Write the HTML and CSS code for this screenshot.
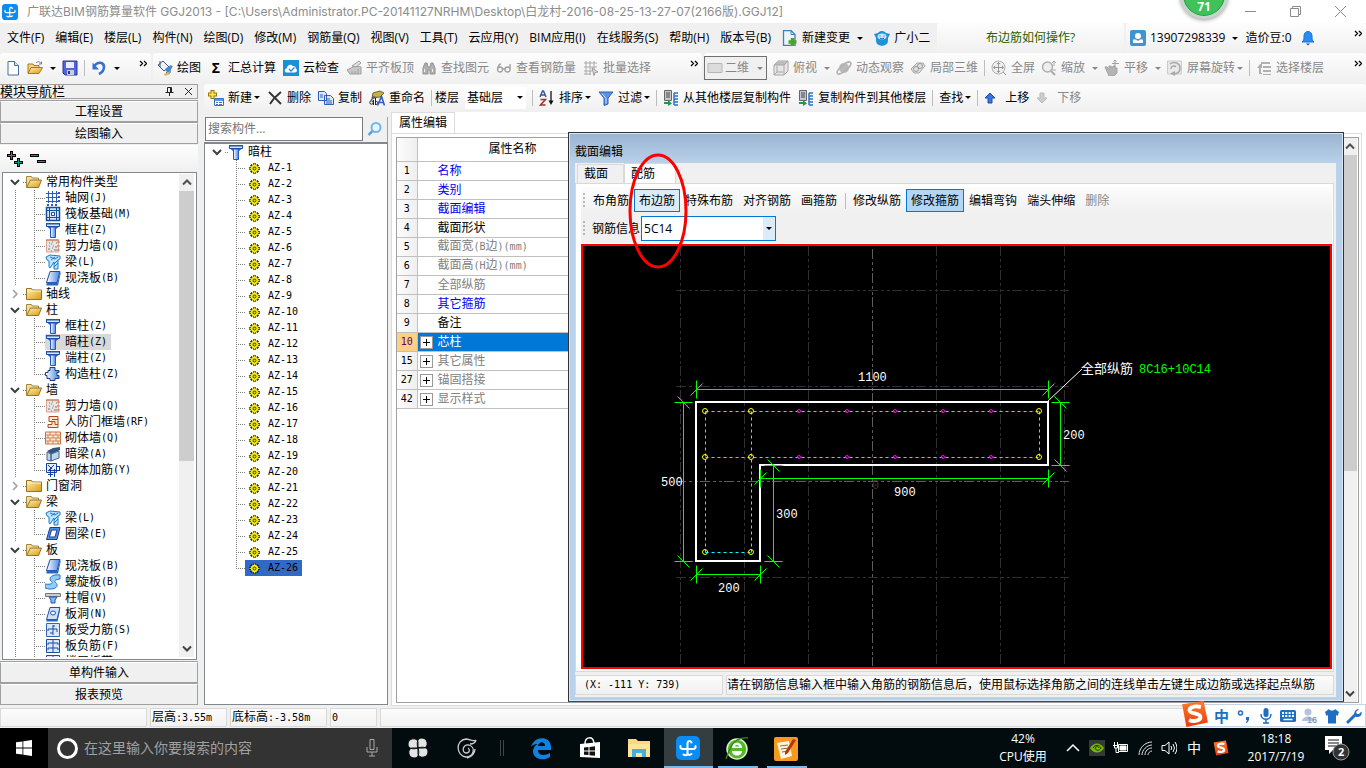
FILE: index.html
```html
<!DOCTYPE html>
<html lang="zh-CN">
<head>
    <meta charset="UTF-8">
    <meta name="viewport" content="width=device-width, initial-scale=1.0">
    <title>广联达BIM钢筋算量软件 GGJ2013</title>
    <link rel="stylesheet" href="styles.css">
</head>
<body>
    <svg class="defs" aria-hidden="true">
        <defs>
            <linearGradient id="g-blue" x1="0" x2="1"><stop offset="0" stop-color="#fff"/><stop offset="1" stop-color="#4a86e0"/></linearGradient>
            <linearGradient id="g-gold" x1="0" x2="1" y2="1"><stop offset="0" stop-color="#fff0b0"/><stop offset="1" stop-color="#d99a14"/></linearGradient>
            <linearGradient id="g-orange" x2="0" y2="1"><stop offset="0" stop-color="#ff7a2d"/><stop offset="1" stop-color="#e63c0c"/></linearGradient>
        </defs>
        <symbol id="i-app" viewBox="0 0 24 24"><rect width="24" height="24" rx="5" fill="#0a8cf5"/><path d="M15.500 6.500c-1-2-4-2-4 1V17c0 3-3 2.500-4 1.500M4.500 10c-.5 2 .5 3 2.500 3h10c2 0 3-1 2.500-3M11.500 13v4c0 2 2 2.500 4 1" fill="none" stroke="#fff" stroke-width="2" stroke-linecap="round"/></symbol>
        <symbol id="i-new" viewBox="0 0 16 16"><path d="M3 1.500h6.500l4 4v9.500H3z" fill="#fff" stroke="#4a6c9c"/><path d="M9.500 1.500v4h4" fill="#d6e4f6" stroke="#4a6c9c"/></symbol>
        <symbol id="i-open" viewBox="0 0 16 16"><path d="M1 13V4h5l1 1.500h5V8" fill="#f6d37a" stroke="#a87b20"/><path d="M1 13.500 4 7.500h11.500L12 13.500z" fill="url(#g-gold)" stroke="#a87b20"/><path d="M9 3c2-2 4-1.500 5 .5m.5-2v2.500h-2.500" fill="none" stroke="#5c7fa8"/></symbol>
        <symbol id="i-save" viewBox="0 0 16 16"><path d="M1 1h14v14H3l-2-2z" fill="#5464d8" stroke="#2b369c"/><path d="M4 2h8v6H4z" fill="#e9edfb"/><path d="M5 10h7v5H5z" fill="#c6cdee"/><path d="M6 11h2v3H6z" fill="#2b369c"/></symbol>
        <symbol id="i-undo" viewBox="0 0 16 16"><path d="M3 6c4-5 10-4 10 1 0 3-2 5.500-5 7" fill="none" stroke="#3a6fd0" stroke-width="2.600"/><path d="M1.500 2.500v7h6.500z" fill="#3a6fd0"/></symbol>
        <symbol id="i-draw" viewBox="0 0 16 16"><path d="m1 5 5-4 6 6-5 4z" fill="#eef3fb" stroke="#3b5679"/><path d="M3 1v6M9 12c2 3 5 2 4-2l2-4" fill="none" stroke="#3b5679"/><path d="m8 9 6-4 1.500 1.500L11 14z" fill="#3b8ad8"/><path d="m7 14 4-2 2 2-5 2z" fill="#e8b442"/></symbol>
        <symbol id="i-cloud" viewBox="0 0 16 16"><rect width="16" height="16" fill="#1b8fd6"/><path d="M4 12.500c-3 0-3-4 0-4.300C4 5 8 3.500 9.700 6c2-.5 3.300 1 3 2.500 2 .6 1.600 4-.7 4z" fill="#fff"/><path d="m6 9 2 2 3.500-3.500" fill="none" stroke="#1b8fd6" stroke-width="1.300"/></symbol>
        <symbol id="i-slab" viewBox="0 0 16 16"><path d="m1 10 8-4 6 1v7H4z" fill="#c9c9c9" stroke="#9d9d9d"/><path d="M6 6 13 1l2 2-5 4zM6 11v3m3-3v3m3-5v5" fill="#e2e2e2" stroke="#9d9d9d"/></symbol>
        <symbol id="i-find" viewBox="0 0 16 16"><path d="M2 14V8l2-5h2l1 4h2l1-4h2l2 5v6h-5v-4H7v4z" fill="#b0b0b0" stroke="#929292"/><path d="M3.500 9v3m8-3v3" stroke="#eee"/></symbol>
        <symbol id="i-glasses" viewBox="0 0 16 16"><g fill="none" stroke="#a0a0a0" stroke-width="1.300"><circle cx="4" cy="9.500" r="2.500"/><circle cx="11.500" cy="9.500" r="2.500"/><path d="M6.500 9h2.500M1.500 9c1-4 2-5 3.500-5M14 9V4"/></g></symbol>
        <symbol id="i-batch" viewBox="0 0 16 16"><path d="M1 3h13M1 7h13M1 11h8M1 14h7M3 1v14M7 1v14M11 1v8" stroke="#aaa" fill="none"/><path d="m9 8 6 4-3 .5-1 3z" fill="#ddd" stroke="#999"/></symbol>
        <symbol id="i-rect" viewBox="0 0 16 16"><path d="M1 3.500h14v9H1z" fill="#dcdcdc" stroke="#b6b6b6"/></symbol>
        <symbol id="i-cube" viewBox="0 0 16 16"><path d="m1 5 4-4h10v10l-4 4H1z" fill="#e6e6e6" stroke="#a6a6a6"/><path d="m1 5 4-4h10l-4 4z" fill="#bcbcbc"/><path d="M1 5h10v10M11 5l4-4M4 6v6l-3 3m3-3h6" fill="none" stroke="#a6a6a6"/></symbol>
        <symbol id="i-orbit" viewBox="0 0 16 16"><circle cx="8" cy="8" r="5" fill="#b9b9b9"/><ellipse cx="8" cy="8" rx="8.500" ry="3" transform="rotate(-40 8 8)" fill="none" stroke="#b2b2b2" stroke-width="1.500"/></symbol>
        <symbol id="i-part" viewBox="0 0 16 16"><path d="m1 9 6-6h6l2 3-6 7H4z" fill="#e2e2e2" stroke="#a6a6a6"/><circle cx="6" cy="9" r="2.500" fill="none" stroke="#999"/><circle cx="10" cy="6" r="2.500" fill="none" stroke="#999"/></symbol>
        <symbol id="i-full" viewBox="0 0 16 16"><circle cx="7.500" cy="7.500" r="6.500" fill="#eee" stroke="#b0b0b0"/><path d="M7.500 2.500v10M2.500 7.500h10M6 4l1.500-1.500L9 4M6 11l1.500 1.500L9 11M4 6 2.500 7.500 4 9m7-3 1.500 1.500L11 9m1 3 3 3" fill="none" stroke="#999"/></symbol>
        <symbol id="i-zoom" viewBox="0 0 16 16"><circle cx="6.500" cy="7" r="5" fill="#eee" stroke="#b0b0b0" stroke-width="1.500"/><path d="m10 11 4 4" stroke="#aaa" stroke-width="2"/><path d="M13 1v5m-2-3 2-2 2 2m-4 7h4" fill="none" stroke="#aaa"/></symbol>
        <symbol id="i-pan" viewBox="0 0 16 16"><path d="M1 7c2-1 3 1 4 2V6h2v1h2V6h2v2h2v5l-3 3H5z" fill="#b4b4b4" stroke="#a4a4a4"/><path d="M11 0v7M8 3.500h7M9.500 1.500 11 0l1.500 1.500" fill="none" stroke="#a0a0a0"/></symbol>
        <symbol id="i-rotate" viewBox="0 0 16 16"><path d="M.5 1h14v13H.5z" fill="#e9e9e9" stroke="#ccc"/><path d="M3 4c4-3 10-1 10 4s-4 6-7 6M4 9c0-3 3-4 5-2" fill="none" stroke="#aaa" stroke-width="1.600"/><path d="M3 13.500 8 11v5z" fill="#aaa"/></symbol>
        <symbol id="i-floors" viewBox="0 0 16 16"><path d="M5 2h9v2H5zm2 4h8v2H7zm0 4h8v2H7zm0 4h8v1H7zM4 4 1 8h2v6h3v-1H5V8h1V4z" fill="#b0b0b0"/></symbol>
        <symbol id="i-add" viewBox="0 0 16 16"><path d="M4.500 0v9M0 4.500h9" stroke="#9c7900" stroke-width="4"/><path d="M4.500 1v7M1 4.500h7" stroke="#ffe24a" stroke-width="2"/><path d="M6.500 8.500h9v7h-9z" fill="#fff" stroke="#3a6fc4"/><path d="M7 9h8v2H7z" fill="#5b93e6"/><path d="M8 12.500h2m1 0h3m-6 2h2m1 0h3" stroke="#3a6fc4"/></symbol>
        <symbol id="i-x" viewBox="0 0 16 16"><path d="m2 2 12 12M14 2C9 6 6 9 3 14" stroke="#333" stroke-width="1.800" fill="none"/></symbol>
        <symbol id="i-copy" viewBox="0 0 16 16"><path d="M.5 1.500h6l2 2v7h-8zM6.500 5.500h6l3 3v6h-9z" fill="#d9e7fb" stroke="#2d5fb8"/><path d="M2 5h3M2 7h3m3 2h4m-4 2h6m-6 2h6" stroke="#2d5fb8"/></symbol>
        <symbol id="i-rename" viewBox="0 0 16 16"><path d="m4 3 7-2 4 2-4 4-8 1z" fill="#c8b13c" stroke="#6c6637"/><path d="m1 11 3-5 4 1z" fill="#55606a"/><circle cx="2.500" cy="12.500" r="1.700" fill="none" stroke="#222"/><path d="M4.500 10v5M6.500 8v7m0-3c3-2 3 3 0 2.500" fill="none" stroke="#222"/><path d="m8.500 15.500 4-9 3 9m-5-3h4" fill="none" stroke="#2c5fc4" stroke-width="1.600"/></symbol>
        <symbol id="i-sort" viewBox="0 0 16 16"><path d="m1 7 2.500-6h1L7 7M2 5h4" fill="none" stroke="#3555a5" stroke-width="1.500"/><path d="M1.500 9.500h5l-5 5.500h5" fill="none" stroke="#a33232" stroke-width="1.500"/><path d="M12 1v11" stroke="#111" stroke-width="1.300"/><path d="M9.500 10.500h5L12 15z" fill="#111"/></symbol>
        <symbol id="i-filter" viewBox="0 0 16 16"><path d="M1 2h14l-5 6v6l-4 1.500V8z" fill="#5b93e6" stroke="#2c5fb4"/><path d="m4 3.500 4 5v5" stroke="#cfe1fb" fill="none"/></symbol>
        <symbol id="i-floorcopy" viewBox="0 0 16 16"><path d="M1.500.5h7v10h-7z" fill="#c5c9cf" stroke="#666"/><path d="M3 3h4M3 5h4M3 7h4" stroke="#444"/><path d="M11 3h4M11 6h4m-4 3h4m-4 3h4m-4 3h4M11 3v12" stroke="#2c71c9" stroke-width="1.500"/><path d="M1 12h4v-2l4 3.500L5 16v-2H1z" fill="#1a9b4a"/></symbol>
        <symbol id="i-up" viewBox="0 0 12 12"><path d="m6 1 5 5H8v5H4V6H1z" fill="#3b74e0" stroke="#1f4da8"/></symbol>
        <symbol id="i-down" viewBox="0 0 12 12"><path d="m6 11 5-5H8V1H4v5H1z" fill="#ccc" stroke="#bbb"/></symbol>
        <symbol id="i-change" viewBox="0 0 16 16"><path d="M1.500.5H9l4 4v11H1.500z" fill="#eaf5fd" stroke="#3b83b8" stroke-width="1.300"/><path d="M9 .5v4h4" fill="none" stroke="#3b83b8"/><path d="M10.500 8v8m-4-4h8" stroke="#48a525" stroke-width="3.500"/></symbol>
        <symbol id="i-face" viewBox="0 0 16 16"><path d="M0 4 4 3c3-3 6-2 8 0l4 1-2 4v2c0 4-2 5-6 6-4-1-6-2-6-6V8z" fill="#1e90dc"/><ellipse cx="8" cy="6.500" rx="4.500" ry="3" fill="#c9e7fb"/><path d="M5.500 6h1M9.500 6h1M6 8c1 1.200 3 1.200 4 0" stroke="#0c5c99" fill="none"/></symbol>
        <symbol id="i-user" viewBox="0 0 16 16"><rect width="16" height="16" rx="2" fill="#3e95cf"/><circle cx="8" cy="6" r="3" fill="#fff"/><path d="M3 13V9.500h3L8 11l2-1.500h3V13z" fill="#fff"/></symbol>
        <symbol id="i-bell" viewBox="0 0 16 16"><path d="M2 12c2-1.500 2-3 2-6 0-6 8-6 8 0 0 3 0 4.500 2 6z" fill="#2b8bf2" stroke="#1672d6"/><path d="M6 13.500h4L8 15.500z" fill="#1252a0"/></symbol>
        <symbol id="i-search" viewBox="0 0 16 16"><circle cx="9" cy="6.500" r="4.500" fill="#e9f5ff" stroke="#6fb7ee" stroke-width="2"/><path d="m5.500 10-4 4" stroke="#5aa7e4" stroke-width="2.500"/></symbol>
        <symbol id="i-down-chev" viewBox="0 0 10 10"><path d="m1 3 4 4 4-4" fill="none" stroke="#404040" stroke-width="2"/></symbol>
        <symbol id="i-up-chev" viewBox="0 0 10 10"><path d="m1 7 4-4 4 4" fill="none" stroke="#505050" stroke-width="2"/></symbol>
        <symbol id="i-right-chev" viewBox="0 0 10 10"><path d="m3 1 4 4-4 4" fill="none" stroke="#a0a0a0" stroke-width="1.500"/></symbol>
        <symbol id="i-more" viewBox="0 0 8 8"><path d="m1 1 2.500 2.500L1 6m4-5 2.500 2.500L5 6" fill="none" stroke="#000" stroke-width="1.300"/></symbol>
        <symbol id="t-open" viewBox="0 0 16 16"><path d="M.5 13V2.500h5l1 1.500h6V6" fill="#f5dc96" stroke="#a88744"/><path d="m.5 13.500 4-7.500h11l-3 7.500z" fill="url(#g-gold)" stroke="#96722a"/></symbol>
        <symbol id="t-closed" viewBox="0 0 16 16"><path d="M.5 13.500v-11h5l1 1.500h9v9.500z" fill="url(#g-gold)" stroke="#96722a"/><path d="M1 5h14" stroke="#fff3c4"/></symbol>
        <symbol id="t-axis" viewBox="0 0 16 16"><path d="M3.500 1v12M7.500 1v12M11.500 1v12M1 3.500h12M1 7.500h12M1 11.500h12" stroke="#2a5cc0"/><path d="M13 2h2v2h-2zm0 4h2v2h-2zm0 4h2v2h-2zM2 14h2v2H2zm4 0h2v2H6zm4 0h2v2h-2z" fill="#2a5cc0"/></symbol>
        <symbol id="t-raft" viewBox="0 0 16 16"><path d="M1.500 1.500h13v13h-13z" fill="#d7e6fa" stroke="#174f9b" stroke-width="1.500"/><path d="M4.500 2v12M11.500 2v12M2 4.500h12M2 11.500h12" stroke="#174f9b"/><path d="M6.500 6.500h3v3h-3z" fill="#fff" stroke="#174f9b"/></symbol>
        <symbol id="t-column" viewBox="0 0 16 16"><path d="M1.500 1.500h13v3h-13z" fill="#d7e5fb" stroke="#19479c"/><path d="M1 1h14v1.500H1z" fill="#24559f"/><path d="M5.500 5h5v10.500h-5z" fill="url(#g-blue)" stroke="#2159c4"/><path d="m2.500 5 3 2.500v-3zm11 0-3 2.500v-3z" fill="#2d65cb"/></symbol>
        <symbol id="t-wall" viewBox="0 0 16 16"><path d="M1.500 2h12v12h-12z" fill="#e6e5e3" stroke="#d9a68e"/><path d="M1 2h13" stroke="#c66a45"/><path d="M4 5h1m2-1h1m3 1h1M4 8h1m3 0h1M3 11h2m2-1h1m1 2h3M6 6h1m3 3h2m-6 4h1" stroke="#777"/><path d="M12 4h3m-3 4h3m-3 4h3" stroke="#e07030"/></symbol>
        <symbol id="t-beam" viewBox="0 0 16 16"><path d="m1 3 4-2 10 1v3l-2 1v9H9V8l-4 6-1-1V7L2 6z" fill="#bfe3fa" stroke="#1d7cc9"/><path d="m5 3 5 2 3-2M6 6l4-3m-1 7 4-4m-4 7 4-4" fill="none" stroke="#1d7cc9"/></symbol>
        <symbol id="t-plate" viewBox="0 0 16 16"><path d="M5 1.500h10l-3 11H1.500z" fill="url(#g-blue)" stroke="#1c50a8"/><path d="M1.500 12.500h11l3-11v3l-2.500 11H1.500z" fill="#2a64c4"/></symbol>
        <symbol id="t-ctor" viewBox="0 0 16 16"><path d="M5 1.500h5v3h4v2h-2v3h2v3h-4v2H5v-2H2v-3H.5v-3H3v-2h2z" fill="url(#g-blue)" stroke="#173f85"/></symbol>
        <symbol id="t-door" viewBox="0 0 16 16"><path d="M4 2.500h9v11H3v-3h4v-3H4z" fill="#ffe5cf" stroke="#a74f1f"/><path d="M7 5.500h6M7 7.500h3v3h3" fill="none" stroke="#a74f1f"/></symbol>
        <symbol id="t-brick" viewBox="0 0 16 16"><path d="M.5 2h15v12H.5z" fill="#fcebdc" stroke="#c87243"/><path d="M1 5h14M1 8h14M1 11h14M5 2v3m6-3v3M3 5v3m5-3v3m5-3v3M5 8v3m6-3v3M3 11v3m5-3v3m5-3v3" stroke="#d0814f"/></symbol>
        <symbol id="t-hbeam" viewBox="0 0 16 16"><path d="M2 6v8l4 1V8zm4 2 8-3v7l-8 3z" fill="#bcd6f2" stroke="#4a6585"/><path d="m2 5 6-3 7-1v3L6 8z" fill="#34557e"/></symbol>
        <symbol id="t-rebar" viewBox="0 0 16 16"><path d="M1.500 1.500h10v9h-10z" fill="#e2ecfc" stroke="#1640a2"/><path d="M5.500 7v8M9.500 7v8M3 8.500h12M11 4.500h4M14.500 4v5M4 8l5-5M3 3l4 4M3 12.500h5" fill="none" stroke="#1640a2"/></symbol>
        <symbol id="t-ring" viewBox="0 0 16 16"><path d="M5 1.500h10l-3 12H1.500z" fill="#5590e4" stroke="#143f94"/><path d="M6.500 4h5.500l-2 7H4.500z" fill="#fff" stroke="#143f94"/></symbol>
        <symbol id="t-spiral" viewBox="0 0 16 16"><path d="M15 1C7 0 3 4 6 7c3 2 0 4-6 3v4c8 3 15-1 11-5-2-2-2-3 4-4z" fill="#90cdf7" stroke="#1d74c4"/></symbol>
        <symbol id="t-cap" viewBox="0 0 16 16"><path d="M.5 3.500h15v3H.5z" fill="#ccc" stroke="#777"/><path d="M4 7h8l-2 3v3H6v-3z" fill="#8ab6f0" stroke="#1f56ac"/></symbol>
        <symbol id="t-hole" viewBox="0 0 16 16"><path d="M5 1.500h10l-3 12H1.500z" fill="#d0e2fb" stroke="#1c50a8"/><path d="M1.500 13.500H12l3-12v3l-2.500 11h-11z" fill="#2a64c4"/><ellipse cx="8" cy="7" rx="2.500" ry="2" fill="#fff" stroke="#1c50a8"/></symbol>
        <symbol id="t-sbar" viewBox="0 0 16 16"><path d="M1.500 1.500h13v13h-13z" fill="#dbe8fb" stroke="#3264b8"/><path d="M8 3v10M3 9V7h9v3M5 11h3m0-7h2" fill="none" stroke="#1c4da4"/></symbol>
        <symbol id="t-fbar" viewBox="0 0 16 16"><path d="M1.500 1.500h13v13h-13z" fill="#dbe8fb" stroke="#1c4da4"/><path d="M8 2v12M3 7V5h10v2M3 12v-2h10v2" fill="none" stroke="#1c4da4"/></symbol>
        <symbol id="t-gear" viewBox="0 0 12 12"><path d="M6 0v12M0 6h12M2 2l8 8M10 2l-8 8" stroke="#1a1a00" stroke-width="2.500"/><circle cx="6" cy="6" r="4" fill="#f5ee00"/><path d="M6 .5v2M6 9.500v2M.5 6h2M9.500 6h2" stroke="#f5ee00"/><circle cx="6" cy="6" r="1.600" fill="#f5ee00" stroke="#222"/></symbol>
        <symbol id="s-logo" viewBox="0 0 26 26"><path d="m1 4 20-3 4 20-20 4z" fill="url(#g-orange)"/><path d="M18.500 6.500C12 5 7.500 7 8 10s9.500 2 10 5.500S12 20.500 7.500 18.500" fill="none" stroke="#fff" stroke-width="3.600"/></symbol>
    </svg>

    <header class="titlebar">
        <svg class="icon"><use href="#i-app"/></svg>
        <h1>广联达BIM钢筋算量软件 GGJ2013 - [C:\Users\Administrator.PC-20141127NRHM\Desktop\白龙村-2016-08-25-13-27-07(2166版).GGJ12]</h1>
        <div class="win-controls">
            <button aria-label="最小化"><svg viewBox="0 0 11 11"><path d="M0 5.500h11"/></svg></button>
            <button aria-label="还原"><svg viewBox="0 0 11 11"><path d="M.5 2.500h8v8h-8zM2.500 2V.5h8v8H9"/></svg></button>
            <button aria-label="关闭"><svg viewBox="0 0 11 11"><path d="m0 0 11 11M11 0 0 11"/></svg></button>
        </div>
    </header>
    <div class="badge">71</div>

    <nav class="menubar">
        <div class="menus">
            <button>文件(F)</button>
            <button>编辑(E)</button>
            <button>楼层(L)</button>
            <button>构件(N)</button>
            <button>绘图(D)</button>
            <button>修改(M)</button>
            <button>钢筋量(Q)</button>
            <button>视图(V)</button>
            <button>工具(T)</button>
            <button>云应用(Y)</button>
            <button>BIM应用(I)</button>
            <button>在线服务(S)</button>
            <button>帮助(H)</button>
            <button>版本号(B)</button>
            <button class="tool"><svg class="icon"><use href="#i-change"/></svg>新建变更<i class="caret wide"></i></button>
            <button class="tool"><svg class="icon"><use href="#i-face"/></svg>广小二</button>
        </div>
        <div class="strip help"><a href="#">布边筋如何操作?</a></div>
        <div class="strip account">
            <button class="tool"><svg class="icon"><use href="#i-user"/></svg>13907298339<i class="caret wide"></i></button>
            <button class="tool">造价豆:0 <svg class="icon bell"><use href="#i-bell"/></svg></button>
            <svg class="more"><use href="#i-more"/></svg>
        </div>
    </nav>

    <div class="toolbar main-tools">
        <div class="strip file-tools">
            <button class="tool" aria-label="新建"><svg class="icon"><use href="#i-new"/></svg></button>
            <button class="tool" aria-label="打开"><svg class="icon"><use href="#i-open"/></svg><i class="caret wide"></i></button>
            <button class="tool" aria-label="保存"><svg class="icon"><use href="#i-save"/></svg></button>
            <span class="sep"></span>
            <button class="tool" aria-label="撤销"><svg class="icon"><use href="#i-undo"/></svg><i class="caret wide"></i></button>
            <svg class="more"><use href="#i-more"/></svg>
        </div>
        <div class="strip draw-tools">
            <button class="tool"><svg class="icon"><use href="#i-draw"/></svg>绘图</button>
            <button class="tool"><b class="icon sigma">Σ</b>汇总计算</button>
            <button class="tool"><svg class="icon"><use href="#i-cloud"/></svg>云检查</button>
            <button class="tool" disabled><svg class="icon"><use href="#i-slab"/></svg>平齐板顶</button>
            <button class="tool" disabled><svg class="icon"><use href="#i-find"/></svg>查找图元</button>
            <button class="tool" disabled><svg class="icon"><use href="#i-glasses"/></svg>查看钢筋量</button>
            <button class="tool" disabled><svg class="icon"><use href="#i-batch"/></svg>批量选择</button>
            <svg class="more"><use href="#i-more"/></svg>
        </div>
        <div class="strip view-tools">
            <label class="dim-box"><svg class="icon"><use href="#i-rect"/></svg><select disabled aria-label="视图维度"><option>二维</option></select><i class="caret"></i></label>
            <button class="tool" disabled><svg class="icon"><use href="#i-cube"/></svg>俯视<i class="caret wide"></i></button>
            <button class="tool" disabled><svg class="icon"><use href="#i-orbit"/></svg>动态观察</button>
            <button class="tool" disabled><svg class="icon"><use href="#i-part"/></svg>局部三维</button>
            <span class="sep"></span>
            <button class="tool" disabled><svg class="icon"><use href="#i-full"/></svg>全屏</button>
            <button class="tool" disabled><svg class="icon"><use href="#i-zoom"/></svg>缩放<i class="caret wide"></i></button>
            <button class="tool" disabled><svg class="icon"><use href="#i-pan"/></svg>平移<i class="caret wide"></i></button>
            <button class="tool" disabled><svg class="icon"><use href="#i-rotate"/></svg>屏幕旋转<i class="caret"></i></button>
            <span class="sep"></span>
            <button class="tool" disabled><svg class="icon"><use href="#i-floors"/></svg>选择楼层</button>
            <svg class="more"><use href="#i-more"/></svg>
        </div>
    </div>

    <div class="workspace">
        <aside class="navigator">
            <div class="nav-head"><span>模块导航栏</span>
                <svg viewBox="0 0 9 9"><path d="M2.500 5V.5h4V5M.5 5.500h8M4.500 6v3M5.500 1v4"/></svg>
                <svg viewBox="0 0 9 9"><path d="m1 1 7 7M8 1 1 8"/></svg>
            </div>
            <button class="nav-btn">工程设置</button>
            <button class="nav-btn">绘图输入</button>
            <div class="nav-tools">
                <button aria-label="全部展开"><svg viewBox="0 0 16 16"><path d="M4.500 0v9M0 4.500h9M11.500 7v9M7 11.500h9" stroke="#000" stroke-width="3"/><path d="M4.500 1v7M1 4.500h7M11.500 8v7M8 11.500h7" stroke="#0a9a8a"/></svg></button>
                <button aria-label="全部折叠"><svg viewBox="0 0 16 16"><path d="M0 4.500h9M7 10.500h9" stroke="#000" stroke-width="3"/><path d="M1 4.500h7M8 10.500h7" stroke="#0a9a8a"/></svg></button>
            </div>
            <div class="tree-box">
                <ul class="tree" id="module-tree"></ul>
                <div class="scrollbar">
                    <svg><use href="#i-up-chev"/></svg>
                    <div class="thumb"></div>
                    <svg><use href="#i-down-chev"/></svg>
                </div>
            </div>
            <button class="nav-btn">单构件输入</button>
            <button class="nav-btn">报表预览</button>
        </aside>

        <main class="content">
            <div class="toolbar">
                <div class="strip component-tools">
                    <button class="tool"><svg class="icon"><use href="#i-add"/></svg>新建<i class="caret"></i></button>
                    <button class="tool"><svg class="icon"><use href="#i-x"/></svg>删除</button>
                    <button class="tool"><svg class="icon"><use href="#i-copy"/></svg>复制</button>
                    <button class="tool"><svg class="icon"><use href="#i-rename"/></svg>重命名</button>
                    <span class="sep"></span>
                    <label class="floor"><span>楼层</span>
                        <span class="floor-box"><select><option>基础层</option></select><i class="caret"></i></span>
                    </label>
                    <span class="sep"></span>
                    <button class="tool"><svg class="icon"><use href="#i-sort"/></svg>排序<i class="caret"></i></button>
                    <button class="tool"><svg class="icon"><use href="#i-filter"/></svg>过滤<i class="caret"></i></button>
                    <span class="sep"></span>
                    <button class="tool"><svg class="icon"><use href="#i-floorcopy"/></svg>从其他楼层复制构件</button>
                    <button class="tool"><svg class="icon"><use href="#i-floorcopy"/></svg>复制构件到其他楼层</button>
                    <span class="sep"></span>
                    <button class="tool">查找<i class="caret"></i></button>
                    <span class="sep"></span>
                    <button class="tool move"><svg class="icon"><use href="#i-up"/></svg>上移</button>
                    <button class="tool move" disabled><svg class="icon"><use href="#i-down"/></svg>下移</button>
                </div>
            </div>

            <div class="panes">
                <section class="components">
                    <div class="search">
                        <input type="text" placeholder="搜索构件..." aria-label="搜索构件">
                        <button aria-label="搜索"><svg class="icon"><use href="#i-search"/></svg></button>
                    </div>
                    <div class="component-box">
                        <ul class="tree wide-tree" id="component-tree"></ul>
                    </div>
                </section>

                <section class="editor">
                    <div class="tab">属性编辑</div>
                    <div class="page">
                        <div class="grid-box">
                            <table class="props">
                                <thead>
                                    <tr><th class="no"></th><th class="name">属性名称</th><th></th></tr>
                                </thead>
                                <tbody id="props-body"></tbody>
                            </table>
                            <div class="scrollbar">
                                <svg><use href="#i-up-chev"/></svg>
                                <div class="thumb"></div>
                                <svg><use href="#i-down-chev"/></svg>
                            </div>
                        </div>
                    </div>

                    <div class="dialog" role="dialog" aria-label="截面编辑">
                        <div class="dialog-title">截面编辑</div>
                        <div class="dialog-body">
                            <div class="dialog-tabs">
                                <button>截面</button>
                                <button class="active">配筋</button>
                            </div>
                            <div class="dialog-page">
                                <div class="dialog-tools">
                                    <span class="grip"></span>
                                    <button>布角筋</button>
                                    <button class="hover">布边筋</button>
                                    <button>特殊布筋</button>
                                    <button>对齐钢筋</button>
                                    <button>画箍筋</button>
                                    <span class="sep"></span>
                                    <button>修改纵筋</button>
                                    <button class="checked">修改箍筋</button>
                                    <button>编辑弯钩</button>
                                    <button>端头伸缩</button>
                                    <button disabled>删除</button>
                                </div>
                                <div class="dialog-tools second">
                                    <span class="grip"></span>
                                    <label for="rebar">钢筋信息</label>
                                    <span class="rebar-box"><select id="rebar"><option>5C14</option></select><i class="caret"></i></span>
                                </div>
                                <div class="canvas">
                                    <svg class="drawing" width="747" height="420" viewBox="0 0 747 420">
                                        <!-- 轴网 -->
                                        <g class="axis">
                                            <path d="M97.500 0v420M161.500 0v420M225.500 0v420M353.500 0v420M417.500 0v420M481.500 0v420M93 44.500h393M93 140.500h393M93 331.500h393"/>
                                            <path class="center" d="M289.500 3v417M93 235.500h393"/>
                                        </g>
                                        <text class="origin" x="289" y="243">0</text>
                                        <!-- 截面轮廓 -->
                                        <path class="outline" d="M113 156h352v63H177v96h-64z"/>
                                        <!-- 箍筋 -->
                                        <path class="stirrup" d="M122.500 165.500h334M122.500 211.500h334M122.500 306.500h46M122.500 165.500v141M168.500 165.500v141M456.500 165.500v46"/>
                                        <g id="bars"></g>
                                        <!-- 尺寸标注 -->
                                        <g class="dim" id="dims"></g>
                                        <path class="leader" d="m465 155 34-32"/>
                                        <g class="label">
                                            <text x="275" y="135">1100</text>
                                            <text x="78" y="240">500</text>
                                            <text x="480" y="193">200</text>
                                            <text x="311" y="250">900</text>
                                            <text x="193" y="272">300</text>
                                            <text x="135" y="346">200</text>
                                            <text class="cjk" x="498" y="127">全部纵筋</text>
                                            <text class="green" x="556" y="127">8C16+10C14</text>
                                        </g>
                                    </svg>
                                </div>
                            </div>
                            <div class="dialog-status">
                                <span class="pos">(X: -111 Y: 739)</span>
                                <span class="hint">请在钢筋信息输入框中输入角筋的钢筋信息后，使用鼠标选择角筋之间的连线单击左键生成边筋或选择起点纵筋</span>
                            </div>
                        </div>
                        <svg class="mark" viewBox="0 0 62 118"><ellipse cx="31" cy="59" rx="28" ry="56"/></svg>
                    </div>
                </section>
            </div>
        </main>
    </div>

    <footer class="statusbar">
        <span class="cell empty"></span>
        <span class="cell height">层高<span class="lat">:3.55m</span></span>
        <span class="cell bottom">底标高<span class="lat">:-3.58m</span></span>
        <span class="cell zero"><span class="lat">0</span></span>
        <span class="cell rest"></span>
        <div class="ime">
            <svg class="s-big"><use href="#s-logo"/></svg>
            <b>中</b>
            <svg viewBox="0 0 16 16"><circle cx="4.500" cy="5" r="2" fill="none" stroke="#1e6fc4" stroke-width="1.500"/><path d="M10 9h3v3l-2 3h-1l1-3h-1z" fill="#1e6fc4"/></svg>
            <svg viewBox="0 0 16 16"><rect x="5.500" y="0" width="5" height="9" rx="2.500" fill="#1e6fc4"/><path d="M3 6c0 7 10 7 10 0M8 11v4M5 15h6" fill="none" stroke="#1e6fc4" stroke-width="1.500"/></svg>
            <svg viewBox="0 0 16 16"><rect y="2" width="16" height="12" rx="1.500" fill="#1e6fc4"/><path d="M2 5h12M2 8h12" stroke="#fff" stroke-width="1.800" stroke-dasharray="2 1.300"/><path d="M3.500 11.500h9" stroke="#fff" stroke-width="1.500"/></svg>
            <svg viewBox="0 0 16 16"><circle cx="6" cy="4" r="3.500" fill="#b4c4dc"/><path d="M0 13c0-6 12-6 12 0z" fill="#b4c4dc"/><text x="5" y="15" font-size="9" font-weight="bold" font-family="Liberation Sans" fill="#8a9bb8">16</text></svg>
            <svg viewBox="0 0 16 16"><path d="m1 4 4-3c1 2 5 2 6 0l4 3-1.500 4L12 7v8.500H4V7L2.500 8z" fill="#1e6fc4"/></svg>
            <svg viewBox="0 0 16 16"><path d="m2 14 7-7" stroke="#1e6fc4" stroke-width="3" stroke-linecap="round"/><path d="M13 1 10 4l1 2 2 0 2.500-2.500c1 4-2 6-5 5.500C6.500 8 8 1 13 1z" fill="#1e6fc4"/></svg>
        </div>
    </footer>

    <div class="taskbar">
        <button class="start" aria-label="开始"><svg viewBox="0 0 16 16"><path d="M0 2.300 6.500 1.400v6.200H0zM7.300 1.300 16 0v7.600H7.300zM0 8.400h6.500v6.200L0 13.700zM7.300 8.400H16V16l-8.700-1.300z" fill="#fff"/></svg></button>
        <label class="cortana">
            <i class="ring"></i>
            <input type="text" placeholder="在这里输入你要搜索的内容">
            <svg viewBox="0 0 12 18"><path d="M4 .5h4v10H4zM1 8v5h10V8M6 13v4M3 17h6" fill="none" stroke="#aaa"/></svg>
        </label>
        <div class="apps">
            <button aria-label="应用"><svg viewBox="0 0 24 24"><path d="M12 12c-6 2-10 0-10-4 0-6 9-7 10-2zM12 12c-2-6 0-10 4-10 6 0 7 9 2 10zM12 12c6-2 10 0 10 4 0 6-9 7-10 2zM12 12c2 6 0 10-4 10-6 0-7-9-2-10z" fill="#e4e4e4" stroke="#020c0e"/></svg></button>
            <button aria-label="加速球"><svg viewBox="0 0 24 24" fill="none" stroke="#ccc" stroke-width="1.300"><path d="M21 4c-4 2-6-1-10-1C0 4 1 20 11 21c8 0 10-10 3-12-6-1-8 7-3 8 4 0 4-4 2-5M21 4c-1 4-4 4-6 4M20 13c0 4-3 8-8 9"/></svg></button>
            <span class="bars"></span>
            <button aria-label="Edge"><svg viewBox="0 0 24 24"><path d="M2 11C4 1 20-2 22 10v4H9c0 6 7 6 12 3v4c-6 4-16 3-17-5 0-4 2-7 5-8-5 0-6 2-7 3zm7-1h7c0-5-6-5-7 0z" fill="#1181e0" fill-rule="evenodd"/></svg></button>
            <button aria-label="应用商店"><svg viewBox="0 0 24 24"><path d="M2 8 22 6v16L2 21z" fill="#fff"/><path d="M7 8c0-8 8-8 9-1" fill="none" stroke="#fff" stroke-width="1.500"/><path d="M6 11.500 10.500 11v3.500H6zm5.500-.6 5.500-.6v4.200h-5.500zM6 15.500h4.500v3.600L6 18.700zm5.500 0H17v4.200l-5.500-.5z" fill="#111"/></svg></button>
            <button aria-label="文件资源管理器"><svg viewBox="0 0 24 24"><path d="M1 3h8l2 2h12v16H1z" fill="#f9d978"/><path d="M1 8h22v13H1z" fill="#fde596"/><path d="M5 21v-8h14v8h-4v-4H9v4z" fill="#3fb0e4"/></svg></button>
            <button class="current" aria-label="广联达"><svg><use href="#i-app"/></svg></button>
            <button class="running" aria-label="浏览器"><svg viewBox="0 0 24 24"><circle cx="12" cy="12" r="10" fill="#56b62b" stroke="#d9f3cb" stroke-width="1.500"/><path d="M7 11c0-7 10-7 10 0zM7 14h10c0 6-10 6-10 0z" fill="#fff"/><path d="M10 9.500h4c0-2-4-2-4 0z" fill="#56b62b"/><path d="M1 22C3 16 6 6 12 3s8-2 11-2" stroke="#2e8a12" fill="none" stroke-width="1.300"/></svg></button>
            <button class="running" aria-label="编辑器"><svg viewBox="0 0 24 24"><rect width="24" height="24" rx="2" fill="#f59a1c"/><path d="m3 6 12-2 3 15-11 3z" fill="#fff5dc"/><path d="m6 9 8-1m-7 4 8-1m-7 4 6-1" stroke="#996a3a"/><path d="m11 15 8-13 3 1-8 13-3 2z" fill="#b8360f"/></svg></button>
        </div>
        <div class="cpu"><span>42%</span><span>CPU使用</span></div>
        <div class="tray">
            <svg viewBox="0 0 16 16"><path d="m2 11 6-6 6 6" fill="none" stroke="#fff" stroke-width="1.500"/></svg>
            <svg viewBox="0 0 16 16"><rect width="16" height="16" fill="#34383a"/><path d="M1 8c4-6 10-6 14 0-4 6-10 6-14 0z" fill="#76b900"/><path d="M4 8c2-4 7-3 8 0-2 3-5 3-6 0 1-2 3-2 4 0" fill="none" stroke="#1d3300"/></svg>
            <svg viewBox="0 0 16 16" fill="none" stroke="#fff"><path d="M5.500 4.500h9v7h-9z"/><path d="M7 6h6v4H7z" fill="#fff"/><path d="M1.500 2v3M4.500 2v3M0 5.500h5.500M1.500 6v2h3V6M3 8v4.500h3"/></svg>
            <svg viewBox="0 0 16 16" fill="none" stroke="#ddd"><path d="M2 15C2 8 8 2 15 2M5 15c0-5 5-10 10-10M8 15c0-4 3-7 7-7M11 15c0-2 2-4 4-4"/></svg>
            <svg viewBox="0 0 16 16" fill="none" stroke="#fff"><path d="M1 5.500h3L8 2v12l-4-3.500H1zM10 6q1.500 2 0 4M12 4q3 4 0 8M14 2q4 6 0 12"/></svg>
            <span class="lang">中</span>
            <svg><use href="#s-logo"/></svg>
        </div>
        <div class="clock"><span>18:18</span><span>2017/7/19</span></div>
        <button class="notice" aria-label="通知"><svg viewBox="0 0 26 26"><path d="M1 1h17v14H9l-4 4v-4H1z" fill="#fff"/><path d="M4 5h11M4 8h11M4 11h11" stroke="#111"/><circle cx="17" cy="17" r="8" fill="#333" stroke="#999"/><text x="14" y="21" font-size="11" font-weight="bold" font-family="Open Sans" fill="#fff">2</text></svg></button>
    </div>

    <script>
        // 模块树：[名称, 是否展开, [[图标, 名称, 快捷键], ...]]
        const modules = [
            ['常用构件类型', true, [['axis', '轴网', 'J'], ['raft', '筏板基础', 'M'], ['column', '框柱', 'Z'], ['wall', '剪力墙', 'Q'], ['beam', '梁', 'L'], ['plate', '现浇板', 'B']]],
            ['轴线', false, []],
            ['柱', true, [['column', '框柱', 'Z'], ['column', '暗柱', 'Z', 'current'], ['column', '端柱', 'Z'], ['ctor', '构造柱', 'Z']]],
            ['墙', true, [['wall', '剪力墙', 'Q'], ['door', '人防门框墙', 'RF'], ['brick', '砌体墙', 'Q'], ['hbeam', '暗梁', 'A'], ['rebar', '砌体加筋', 'Y']]],
            ['门窗洞', false, []],
            ['梁', true, [['beam', '梁', 'L'], ['ring', '圈梁', 'E']]],
            ['板', true, [['plate', '现浇板', 'B'], ['spiral', '螺旋板', 'B'], ['cap', '柱帽', 'V'], ['hole', '板洞', 'N'], ['sbar', '板受力筋', 'S'], ['fbar', '板负筋', 'F'], ['fbar', '楼层板带', 'H']]]
        ];

        const props = [
            [1, '名称', 'key'], [2, '类别', 'key'], [3, '截面编辑', 'key'], [4, '截面形状', ''],
            [5, '截面宽<span class="lat">(B</span>边<span class="lat">)(mm)</span>', 'dim-row'],
            [6, '截面高<span class="lat">(H</span>边<span class="lat">)(mm)</span>', 'dim-row'],
            [7, '全部纵筋', 'dim-row'], [8, '其它箍筋', 'key'], [9, '备注', ''],
            [10, '芯柱', 'selected', true], [15, '其它属性', 'dim-row', true],
            [27, '锚固搭接', 'dim-row', true], [42, '显示样式', 'dim-row', true]
        ];

        function icon(id) {
            return `<svg class="icon"><use href="#${id}"/></svg>`;
        }

        function branch(title, open, image, leaves) {
            return `<li class="branch">
                <div class="row"><svg class="chev"><use href="#${open ? 'i-down-chev' : 'i-right-chev'}"/></svg><i class="stub"></i>${icon(image)}${title}</div>
                <ul class="sub">${leaves}</ul>
            </li>`;
        }

        document.getElementById('module-tree').innerHTML = modules.map(([title, open, items]) =>
            branch(title, open, open ? 't-open' : 't-closed', items.map(([img, name, key, cls]) =>
                `<li class="leaf"><i class="stub"></i><span class="item ${cls || ''}">${icon('t-' + img)}${name}<span class="lat">(${key})</span></span></li>`
            ).join(''))
        ).join('');

        let leaves = '';
        for (let i = 1; i <= 26; i++) {
            leaves += `<li class="leaf"><i class="stub"></i><span class="item ${i === 26 ? 'selected' : ''}">${icon('t-gear')}<span class="lat">AZ-${i}</span></span></li>`;
        }
        document.getElementById('component-tree').innerHTML = branch('暗柱', true, 't-column', leaves);

        document.getElementById('props-body').innerHTML = props.map(([no, name, cls, plus]) =>
            `<tr class="${cls}"><td class="no"><span class="lat">${no}</span></td><td class="name">${plus ? '<button class="plus" aria-label="展开"></button>' : ''}<span class="prop">${name}</span></td><td></td></tr>`
        ).join('');

        // 角筋为黄色，边筋为紫色
        const corner = [[122, 165], [168, 165], [456, 165], [122, 211], [168, 211], [456, 211], [122, 306], [168, 306]];
        let bars = corner.map(([x, y]) => `<circle class="corner" cx="${x}" cy="${y}" r="2.5"/>`).join('');
        [216, 264, 312, 360, 408].forEach(x => {
            bars += `<circle class="side" cx="${x}" cy="165" r="1.5"/><circle class="side" cx="${x}" cy="211" r="1.5"/>`;
        });
        document.getElementById('bars').innerHTML = bars;

        // 水平标注 [x1, x2, y]，竖直标注 [x, y1, y2]
        const hDims = [[113.5, 465.5, 143.5], [177.5, 465.5, 232.5], [113.5, 177.5, 328.5]];
        const vDims = [[100.5, 156.5, 315.5], [477.5, 156.5, 219.5], [190.5, 219.5, 315.5]];
        let d = '';
        hDims.forEach(([x1, x2, y]) => {
            d += `M${x1} ${y}H${x2}`;
            [x1, x2].forEach(x => { d += `M${x} ${y - 9}v18M${x - 6} ${y + 6}l12 -12`; });
        });
        vDims.forEach(([x, y1, y2]) => {
            d += `M${x} ${y1}V${y2}`;
            [y1, y2].forEach(y => { d += `M${x - 9} ${y}h18M${x - 6} ${y - 6}l12 12`; });
        });
        document.getElementById('dims').innerHTML = `<path d="${d}"/>`;
    </script>
</body>
</html>
```
FILE: styles.css
```css
* {
    box-sizing: border-box;
}

body {
    margin: 0;
    height: 100vh;
    display: flex;
    flex-direction: column;
    overflow: hidden;
    background-color: #f0f0f0;
    color: #000;
    font-family: "Open Sans", "Noto Sans CJK SC", sans-serif;
    font-size: 12px;
    line-height: 16px;
    white-space: nowrap;
}

button,
input,
select {
    font: inherit;
    color: inherit;
    margin: 0;
    padding: 0;
    border: 0;
    background: none;
}

select {
    appearance: none;
    opacity: 1;
    outline: 0;
}

ul {
    list-style: none;
    margin: 0;
    padding: 0;
}

svg {
    flex: none;
    display: block;
}

.defs {
    width: 0;
    height: 0;
    position: absolute;
}

.icon {
    width: 16px;
    height: 16px;
    flex: none;
}

/* 宋体风格的等宽西文 */
.lat {
    font-family: "DejaVu Sans Mono", monospace;
    font-size: 10px;
}

.caret {
    flex: none;
    width: 6px;
    border: 3px solid transparent;
    border-top-color: currentColor;
    border-bottom: 0;
}

.tool .caret {
    margin-left: -2px;
}

.tool .caret.wide {
    margin-left: 3px;
}

.sep {
    width: 1px;
    height: 16px;
    background-color: #bdbdbd;
}

.more {
    width: 8px;
    height: 8px;
    margin: 0 4px 8px auto;
}

/* 标题栏 */
.titlebar {
    height: 23px;
    display: flex;
    align-items: center;
    gap: 9px;
    padding: 0 20px 0 2px;
    background-color: #fff;
}

.titlebar h1 {
    flex: 1;
    margin: 0;
    font-family: Inter, "Noto Sans CJK SC", sans-serif;
    font-size: 12px;
    font-weight: normal;
    color: #8c8c8c;
}

.win-controls {
    display: flex;
    gap: 34px;
}

.win-controls svg {
    width: 11px;
    height: 11px;
    fill: none;
    stroke: #8c8c8c;
}

.badge {
    position: absolute;
    top: -29px;
    right: 138px;
    width: 48px;
    height: 48px;
    padding-top: 26px;
    border: 3px solid #c9d4cc;
    border-radius: 50%;
    background-color: #3fc25a;
    box-shadow: 0 1px 4px #999, inset 0 0 0 1px #1d9c42;
    color: #fff;
    font-weight: bold;
    text-align: center;
    line-height: 14px;
}

/* 菜单栏和工具栏 */
.menubar,
.toolbar {
    display: flex;
    gap: 2px;
    flex: none;
}

.menubar {
    height: 30px;
}

.toolbar {
    height: 28px;
    padding-bottom: 1px;
}

.main-tools {
    height: 31px;
}

.menus {
    width: 935px;
    display: flex;
    align-items: center;
    gap: 11px;
    padding-left: 7px;
    background-color: #f0f0f0;
}

.strip {
    display: flex;
    align-items: center;
    background: linear-gradient(#fdfdfd, #f0f0f0);
    border-radius: 3px;
    gap: 7px;
}

.help {
    width: 187px;
    justify-content: center;
}

.help a {
    color: #2b6000;
    text-decoration: none;
}

.account,
.view-tools,
.component-tools {
    flex: 1;
}

.account {
    padding-left: 4px;
}

.view-tools {
    gap: 6px;
}

.bell {
    margin-left: 4px;
}

.tool {
    display: flex;
    align-items: center;
    gap: 4px;
}

.tool:disabled,
.dim-box {
    color: #888;
}

.file-tools {
    flex: none;
    width: 151px;
    padding-left: 5px;
    gap: 6px;
}

.draw-tools {
    flex: none;
    width: 549px;
    padding-left: 4px;
}

.sigma {
    text-align: center;
    font-size: 14px;
}

.dim-box {
    display: flex;
    align-items: center;
    gap: 2px;
    width: 63px;
    height: 24px;
    padding-left: 2px;
    border: 1px solid #707070;
    background-color: #f0f0f0;
}

.dim-box select {
    width: 30px;
    color: #888;
}

.component-tools {
    padding-left: 4px;
}

.component-tools .sep {
    margin: 0 -1px;
}

.floor {
    display: flex;
    align-items: center;
    gap: 6px;
    margin-left: -3px;
}

.floor-box {
    display: flex;
    align-items: center;
    width: 61px;
    height: 22px;
    padding-left: 2px;
    background-color: #fff;
}

.floor-box select {
    width: 50px;
}

.component-tools .move {
    gap: 9px;
}

.move .icon {
    width: 12px;
    height: 12px;
}

/* 工作区 */
.workspace {
    flex: 1;
    min-height: 0;
    display: flex;
    gap: 6px;
}

.navigator {
    width: 198px;
    display: flex;
    flex-direction: column;
    padding-bottom: 1px;
}

.nav-head {
    display: flex;
    align-items: center;
    gap: 10px;
    flex: none;
    height: 15px;
    margin-bottom: 1px;
    padding-right: 4px;
    border: 1px solid #a0a0a0;
    border-left: 0;
    font-size: 13px;
    line-height: 13px;
}

.nav-head span {
    flex: 1;
}

.nav-head svg {
    width: 9px;
    height: 9px;
    fill: none;
    stroke: #222;
}

.nav-btn {
    flex: none;
    height: 21px;
    margin-top: 1px;
    border: 1px solid #a0a0a0;
    border-top-color: #fff;
    box-shadow: 0 -1px #a0a0a0;
    line-height: 20px;
}

.nav-tools {
    flex: none;
    display: flex;
    align-items: center;
    gap: 7px;
    height: 27px;
    padding-left: 7px;
    margin-top: 1px;
    background: linear-gradient(#fdfdfd, #f0f0f0);
}

.nav-tools svg {
    width: 16px;
    height: 16px;
}

.tree-box {
    flex: 1;
    min-height: 0;
    display: flex;
    border: 1px solid #828790;
    margin: 0 1px 1px 2px;
    padding: 1px 2px 2px 0;
    background-color: #fff;
}

.tree {
    flex: 1;
    overflow: hidden;
}

.row {
    display: flex;
    align-items: center;
    height: 16px;
    padding-left: 7px;
}

.row .icon {
    margin-right: 4px;
}

.chev {
    width: 10px;
    height: 10px;
}

.row .stub {
    width: 3px;
    margin-left: 3px;
}

.stub {
    width: 11px;
    height: 1px;
    background: repeating-linear-gradient(90deg, #808080 0 1px, transparent 1px 2px);
}

.sub {
    margin-left: 12px;
    padding-left: 19px;
    background: repeating-linear-gradient(#808080 0 1px, transparent 1px 2px) 0 0 / 1px 100% no-repeat;
}

.leaf {
    display: flex;
    align-items: center;
    height: 16px;
    background: repeating-linear-gradient(#808080 0 1px, transparent 1px 2px) 0 0 / 1px 100% no-repeat;
}

.leaf:last-child {
    background-size: 1px 8px;
}

.item {
    display: flex;
    align-items: center;
    height: 16px;
    padding-right: 4px;
}

.item .icon {
    margin-right: 4px;
}

.item.current {
    background-color: #d9d9d9;
}

.wide-tree .sub {
    margin-left: 31px;
    padding-left: 0;
    background: none;
}

.wide-tree .item {
    padding-left: 4px;
}

.wide-tree .item .icon {
    width: 11px;
    height: 11px;
    margin-right: 8px;
}

.wide-tree .stub {
    width: 9px;
}

.wide-tree .row .stub {
    width: 3px;
}

.item.selected {
    background-color: #316ac5;
}

.scrollbar {
    flex: none;
    width: 15px;
    display: flex;
    flex-direction: column;
    align-items: center;
    background-color: #f0f0f0;
}

.scrollbar svg {
    width: 10px;
    height: 17px;
}

.scrollbar svg:last-child {
    margin-top: auto;
}

.thumb {
    width: 100%;
    height: 56%;
    background-color: #cdcdcd;
}

.content {
    flex: 1;
    min-width: 0;
    display: flex;
    flex-direction: column;
}

.panes {
    flex: 1;
    min-height: 0;
    display: flex;
    gap: 3px;
}

.components {
    width: 184px;
    display: flex;
    flex-direction: column;
    padding-top: 5px;
}

.search {
    display: flex;
    height: 25px;
    border-right: 1px solid #a0a0a0;
    padding: 0 4px 1px 1px;
    gap: 4px;
}

.search input {
    flex: 1;
    min-width: 0;
    padding-left: 2px;
    border: 1px solid #7a7a7a;
    background-color: #fff;
}

.search input::placeholder {
    color: #757575;
}

.component-box {
    flex: 1;
    min-height: 0;
    border: 1px solid #828790;
    border-top-width: 2px;
    margin-bottom: 1px;
    background-color: #fff;
}

/* 属性编辑 */
.editor {
    position: relative;
    flex: 1;
    min-width: 0;
    display: flex;
    flex-direction: column;
    padding-right: 4px;
    background-color: #fff;
}

.tab {
    align-self: flex-start;
    height: 21px;
    padding: 2px 7px;
    border: 1px solid #dcdcdc;
    border-bottom: 0;
}

.page {
    flex: 1;
    min-height: 0;
    display: flex;
    border: 1px solid #dcdcdc;
    padding: 3px 2px 2px 4px;
}

.grid-box {
    flex: 1;
    display: flex;
    align-items: stretch;
    justify-content: space-between;
    border: 1px solid #a0a0a0;
    padding-right: 1px;
}

.props {
    align-self: flex-start;
    width: 400px;
    table-layout: fixed;
    border-collapse: collapse;
}

.props th,
.props td {
    height: 19px;
    padding: 0;
    border: 1px solid #c0c0c0;
    border-top: 0;
    border-left: 0;
    line-height: 16px;
    font-weight: normal;
}

.props th {
    height: 23px;
}

.props .no {
    width: 20px;
    background: linear-gradient(90deg, #fcfcfc, #efefef);
    text-align: center;
}

.props .name {
    width: 191px;
}

.prop {
    display: inline-block;
    margin-left: 20px;
}

.key {
    color: #0000f0;
}

.key .no,
.dim-row .no {
    color: #000;
}

.dim-row {
    color: #808080;
}

.props .selected .name {
    background-color: #0078d7;
    color: #fff;
}

.props .selected .no {
    background: #ffcf86;
    color: #600060;
}

.plus {
    width: 13px;
    height: 13px;
    margin-left: 2px;
    border: 1px solid #999;
    vertical-align: -2px;
    background: linear-gradient(#000, #000) center / 7px 1px no-repeat, linear-gradient(#000, #000) center / 1px 7px no-repeat, #fff;
}

.plus + .prop {
    margin-left: 5px;
}

/* 截面编辑窗口 */
.dialog {
    position: absolute;
    top: 20px;
    left: 177px;
    right: 22px;
    bottom: 4px;
    display: flex;
    flex-direction: column;
    padding: 1px 7px 4px 6px;
    border: 1px solid #333;
    border-bottom-color: #26536c;
    box-shadow: inset 0 0 0 1px #d5e6f7;
    background: linear-gradient(#99b4d1, #b9d1ea 30px);
}

.dialog-title {
    height: 29px;
    padding-top: 10px;
    line-height: 16px;
}

.dialog-body {
    flex: 1;
    min-height: 0;
    display: flex;
    flex-direction: column;
    background-color: #f0f0f0;
}

.dialog-tabs {
    display: flex;
    align-items: flex-end;
    height: 20px;
    padding-left: 2px;
}

.dialog-tabs button {
    width: 47px;
    height: 19px;
    padding-left: 6px;
    border: 1px solid #d9d9d9;
    border-bottom: 0;
    text-align: left;
    line-height: 18px;
}

.dialog-tabs .active {
    width: 52px;
    height: 20px;
    background-color: #fff;
}

.dialog-page {
    flex: 1;
    min-height: 0;
    display: flex;
    flex-direction: column;
    margin-right: 2px;
    border: 1px solid #d9d9d9;
    padding: 3px 1px 2px 5px;
    background-color: #fff;
}

.dialog-tools {
    display: flex;
    align-items: center;
    flex: none;
    height: 27px;
    background: linear-gradient(#fcfcfc, #f0f0f0);
}

.dialog-tools.second {
    height: 29px;
    margin-bottom: 1px;
    background: #f0f0f0;
}

.dialog-tools button {
    height: 23px;
    padding: 0 4px;
    border: 1px solid transparent;
}

.dialog-tools .hover {
    border-color: #0078d7;
    background-color: #dcebf8;
}

.dialog-tools .checked {
    border-color: #0078d7;
    background-color: #b3d7f3;
}

.dialog-tools button:disabled {
    color: #888;
}

.dialog-tools .sep {
    margin: 0 2px 0 3px;
}

.dialog-tools label {
    padding-left: 4px;
}

.grip {
    width: 2px;
    height: 16px;
    margin: 0 3px 0 2px;
    background: repeating-linear-gradient(#b8b8b8 0 2px, transparent 2px 4px);
}

.rebar-box {
    display: flex;
    align-items: center;
    width: 135px;
    height: 25px;
    margin-left: 1px;
    border: 1px solid #0078d7;
    background: linear-gradient(#dcebf8, #dcebf8) right / 12px 100% no-repeat #fff;
}

.rebar-box select {
    flex: 1;
    padding-left: 2px;
}

.rebar-box .caret {
    margin-right: 3px;
}

.canvas {
    flex: 1;
    min-height: 0;
    overflow: hidden;
    border: 2px solid #f00;
    background-color: #000;
}

.axis {
    fill: none;
    stroke: #303030;
    stroke-dasharray: 10 3 3 3 3 2;
}

.axis .center {
    stroke: #5c5c5c;
}

.outline {
    fill: none;
    stroke: #fff;
    stroke-width: 2;
}

.stirrup {
    fill: none;
    stroke: #0ff;
    stroke-dasharray: 3 3;
}

.corner {
    fill: none;
    stroke: #ff0;
}

.side {
    fill: none;
    stroke: #f0f;
}

.dim {
    fill: none;
    stroke: #0f0;
}

.leader {
    stroke: #fff;
}

.label {
    fill: #fff;
    font-family: "Liberation Mono", monospace;
    font-size: 12px;
}

.cjk {
    font-family: "Noto Sans CJK SC", sans-serif;
    font-size: 13px;
}

.green {
    fill: #0f0;
}

.origin {
    fill: #3a3a3a;
    font-family: "Liberation Mono", monospace;
}

.dialog-status {
    display: flex;
    gap: 3px;
    margin: 3px 2px 2px 0;
}

.dialog-status span {
    height: 20px;
    border: 1px solid #d9d9d9;
    background: linear-gradient(#fcfcfc, #f0f0f0);
}

.pos {
    width: 148px;
    padding-left: 8px;
    font-family: "DejaVu Sans Mono", monospace;
    font-size: 10px;
    line-height: 18px;
}

.hint {
    flex: 1;
    overflow: hidden;
    line-height: 18px;
}

.mark {
    position: absolute;
    top: 19px;
    left: 58px;
    width: 62px;
    height: 118px;
    fill: none;
    stroke: #f00;
    stroke-width: 3;
}

/* 状态栏 */
.statusbar {
    position: relative;
    flex: none;
    display: flex;
    gap: 3px;
    height: 22px;
    padding: 2px 0 0;
}

.cell {
    height: 19px;
    padding-left: 1px;
    border: 1px solid #d9d9d9;
    background: linear-gradient(#fcfcfc, #f2f2f2);
}

.empty {
    width: 147px;
}

.height {
    width: 77px;
}

.bottom {
    width: 97px;
}

.zero {
    width: 47px;
}

.rest {
    flex: 1;
}

.ime {
    position: absolute;
    right: 0;
    bottom: 1px;
    display: flex;
    align-items: center;
    gap: 6px;
    width: 180px;
    height: 23px;
    padding-left: 27px;
    background-color: #fff;
    border: 1px solid #c5d5e8;
}

.ime svg {
    width: 16px;
    height: 16px;
}

.ime b {
    width: 16px;
    color: #1e6fc4;
    font-size: 15px;
}

.ime .s-big {
    position: absolute;
    left: -6px;
    bottom: -2px;
    width: 28px;
    height: 28px;
}

/* 任务栏 */
.taskbar {
    flex: none;
    display: flex;
    height: 40px;
    background-color: #020c0e;
    color: #fff;
}

.start {
    width: 48px;
    padding-left: 16px;
    background-color: #000;
}

.start svg {
    width: 16px;
    height: 16px;
}

.cortana {
    display: flex;
    align-items: center;
    width: 344px;
    padding: 0 14px 0 9px;
    background-color: #333;
}

.ring {
    width: 21px;
    height: 21px;
    margin-right: 6px;
    border: 3px solid #fff;
    border-radius: 50%;
}

.cortana input {
    flex: 1;
    font-size: 14px;
}

.cortana input::placeholder {
    color: #a0a0a0;
}

.cortana svg {
    width: 12px;
    height: 18px;
}

.apps {
    flex: 1;
    display: flex;
    align-items: stretch;
    padding-left: 2px;
}

.apps button {
    width: 49px;
    padding: 0 12px;
}

.apps svg {
    width: 24px;
    height: 24px;
}

.bars {
    align-self: center;
    width: 4px;
    height: 16px;
    margin: 0 13px 0 8px;
    border: 1px solid #444;
    border-width: 0 1px;
}

.apps .current {
    background-color: #343d3f;
    border-bottom: 2px solid #76b9ed;
    padding-top: 2px;
}

.apps .running {
    padding-top: 2px;
    background: linear-gradient(#76b9ed, #76b9ed) center bottom / 40px 2px no-repeat;
}

.cpu,
.clock {
    display: flex;
    flex-direction: column;
    justify-content: center;
    align-items: center;
    line-height: 18px;
}

.cpu {
    width: 60px;
    margin-right: 12px;
}

.tray {
    display: flex;
    align-items: center;
    gap: 8px;
}

.tray svg {
    width: 16px;
    height: 16px;
}

.lang {
    font-size: 14px;
    margin: 0 4px 0 2px;
}

.clock {
    width: 94px;
}

.notice {
    width: 43px;
}

.notice svg {
    width: 26px;
    height: 26px;
    margin-left: 1px;
}
```
